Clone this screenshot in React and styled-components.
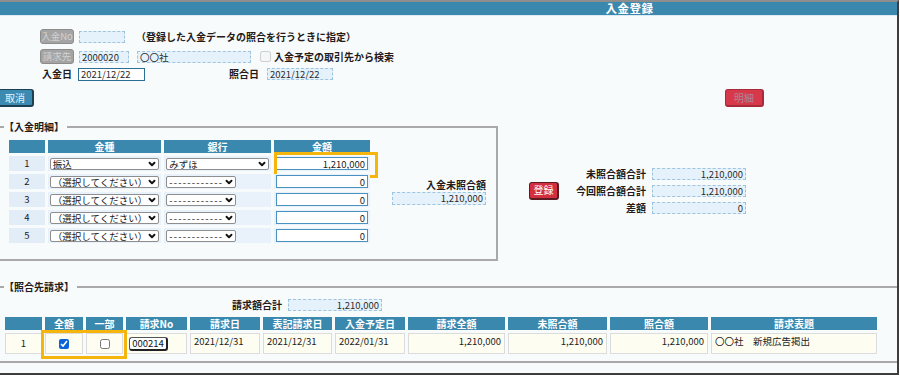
import React from 'react'
import styled, { createGlobalStyle } from 'styled-components'
import { ChevronDown } from 'lucide-react'

const FONT = `"Noto Sans CJK JP", "Noto Sans", sans-serif`

const detailRows = [
  { no: 1, kind: '振込', bank: 'みずほ', amount: '1,210,000' },
  { no: 2, kind: '（選択してください）', bank: null, amount: '0' },
  { no: 3, kind: '（選択してください）', bank: null, amount: '0' },
  { no: 4, kind: '（選択してください）', bank: null, amount: '0' },
  { no: 5, kind: '（選択してください）', bank: null, amount: '0' },
]

const summary = [
  { label: '未照合額合計', value: '1,210,000' },
  { label: '今回照合額合計', value: '1,210,000' },
  { label: '差額', value: '0' },
]

const invoiceColumns = [
  { title: '', w: 37 },
  { title: '全額', w: 38 },
  { title: '一部', w: 37 },
  { title: '請求No', w: 61 },
  { title: '請求日', w: 70 },
  { title: '表記請求日', w: 69 },
  { title: '入金予定日', w: 70 },
  { title: '請求全額', w: 97 },
  { title: '未照合額', w: 99 },
  { title: '照合額', w: 98 },
  { title: '請求表題', w: 166 },
]

const GlobalStyle = createGlobalStyle`
  * { box-sizing: border-box; }
  html, body { margin: 0; padding: 0; background: #ffffff; }
  body { font-family: ${FONT}; font-size: 10px; color: #231a1a; }
`

export default function App() {
  return (
    <>
      <GlobalStyle />
      <Frame>
        <TitleBar>入金登録</TitleBar>

        <FormRow $top={13} $left={40}>
          <DisabledTag>入金No</DisabledTag>
          <Field readOnly value='' $w={46} $gap={5} />
          <Note $gap={11}>（登録した入金データの照合を行うときに指定）</Note>
        </FormRow>
        <FormRow $top={5} $left={40}>
          <DisabledTag>請求先</DisabledTag>
          <Field readOnly value='2000020' $w={50} $gap={5} />
          <Field readOnly value='〇〇社' $w={114} $gap={8} />
          <Check type='checkbox' disabled $gap={9} />
          <Note $gap={3}>入金予定の取引先から検索</Note>
        </FormRow>
        <FormRow $top={3} $left={40} $h={14}>
          <Label $w={34}>入金日</Label>
          <Field readOnly value='2021/12/22' $w={67} $h={13} $gap={4} $active />
          <Label $w={30} $gap={84}>照合日</Label>
          <Field readOnly value='2021/12/22' $w={66} $gap={8} />
        </FormRow>
        <FormRow $top={8} $h={18}>
          <Button $variant='blue' $w={37} $gap={-3}>取消</Button>
          <Button $variant='muted' $w={39} $gap={691}>明細</Button>
        </FormRow>

        <DetailRow>
          <Section $width={502} $pad='3px 10px 13px 0'>
            <SectionTitle>【入金明細】</SectionTitle>
            <DetailInner>
              <DetailTable>
                <thead>
                  <tr>
                    <HeadCell $w={37} />
                    <HeadCell $w={108}>金種</HeadCell>
                    <HeadCell $w={108}>銀行</HeadCell>
                    <HeadCell $w={99}>金額</HeadCell>
                  </tr>
                </thead>
                <tbody>
                  {detailRows.map((row) => (
                    <tr key={row.no}>
                      <NoCell>{row.no}</NoCell>
                      <SelectCell>
                        <Select>
                          <span>{row.kind}</span>
                          <ChevronDown size={10} strokeWidth={4.5} />
                        </Select>
                      </SelectCell>
                      <SelectCell>
                        <Select $w={row.bank ? null : 70}>
                          {row.bank ? <span>{row.bank}</span> : <Dashes>------------</Dashes>}
                          <ChevronDown size={10} strokeWidth={4.5} />
                        </Select>
                      </SelectCell>
                      <SelectCell $rel>
                        <AmountInput readOnly value={row.amount} />
                        {row.no === 1 && <Highlight $l={0} $t={-4} $w={104} $h={26} />}
                      </SelectCell>
                    </tr>
                  ))}
                </tbody>
              </DetailTable>

              <SideTotal>
                <Label>入金未照合額</Label>
                <Field readOnly value='1,210,000' $w={94} $h={13} $right />
              </SideTotal>
            </DetailInner>
          </Section>

          <SummaryArea>
            <Button $variant='red' $w={30}>登録</Button>
            <SummaryGrid>
              {summary.map((s) => (
                <React.Fragment key={s.label}>
                  <Label $right>{s.label}</Label>
                  <Field readOnly value={s.value} $w={94} $right />
                </React.Fragment>
              ))}
            </SummaryGrid>
          </SummaryArea>
        </DetailRow>

        <Section $width={910} $pad='5px 0 4px 0' $top={19}>
          <SectionTitle>【照合先請求】</SectionTitle>
          <FormRow $left={234} $h={12}>
            <Label>請求額合計</Label>
            <Field readOnly value='1,210,000' $w={94} $gap={6} $right />
          </FormRow>
          <InvoiceTable>
            <thead>
              <tr>
                {invoiceColumns.map((c, i) => (
                  <HeadCell key={i} $w={c.w}>{c.title}</HeadCell>
                ))}
              </tr>
            </thead>
            <tbody>
              <tr>
                <InvoiceCell $align='center'>1</InvoiceCell>
                <InvoiceCell $align='center' $rel>
                  <Check type='checkbox' defaultChecked $size={10} />
                  <Highlight $l={-5} $t={-4} $w={86} $h={29} />
                </InvoiceCell>
                <InvoiceCell $align='center'>
                  <Check type='checkbox' $size={10} />
                </InvoiceCell>
                <InvoiceCell>
                  <InvoiceNo>000214</InvoiceNo>
                </InvoiceCell>
                <InvoiceCell $raised>2021/12/31</InvoiceCell>
                <InvoiceCell $raised>2021/12/31</InvoiceCell>
                <InvoiceCell $raised>2022/01/31</InvoiceCell>
                <InvoiceCell $align='right' $raised>1,210,000</InvoiceCell>
                <InvoiceCell $align='right' $raised>1,210,000</InvoiceCell>
                <InvoiceCell $align='right' $raised>1,210,000</InvoiceCell>
                <InvoiceCell $raised>〇〇社　新規広告掲出</InvoiceCell>
              </tr>
            </tbody>
          </InvoiceTable>
        </Section>
      </Frame>
    </>
  )
}

const Frame = styled.div`
  width: 899px;
  height: 375px;
  background: #f7fbfb;
  border-top: 2px solid #8e8e8e;
  border-right: 2px solid #3d3d3d;
  border-bottom: 2px solid #3d3d3d;
  overflow: hidden;
`

const TitleBar = styled.div`
  height: 14px;
  background: #3a88ae;
  border-bottom: 1px solid #dcebf2;
  color: #ffffff;
  font-size: 11.5px;
  font-weight: bold;
  line-height: 13px;
  letter-spacing: 0.5px;
  padding-left: 362px;
  text-align: center;
`

const FormRow = styled.div`
  display: flex;
  align-items: center;
  height: ${({ $h }) => $h || 15}px;
  margin-top: ${({ $top }) => $top || 0}px;
  padding-left: ${({ $left }) => $left || 0}px;
`

const DisabledTag = styled.button`
  flex: none;
  width: 34px;
  height: 15px;
  padding: 0;
  background: #a4a4a4;
  color: #d2d2d2;
  border: 1px solid #8c8c8c;
  border-radius: 3px;
  font: 9.5px/13px ${FONT};
`

const Field = styled.input`
  flex: none;
  width: ${({ $w }) => $w}px;
  height: ${({ $h }) => $h || 12}px;
  margin: 0 0 0 ${({ $gap }) => $gap || 0}px;
  padding: 0 2px;
  font: 9.5px/10px ${FONT};
  color: #2a2a2a;
  text-align: ${({ $right }) => ($right ? 'right' : 'left')};
  background: ${({ $active }) => ($active ? '#ffffff' : '#e6f2fb')};
  border: ${({ $active }) => ($active ? '1.5px solid #2c6e94' : '1px dashed #9fc4de')};
  border-radius: 0;
  outline: none;
`

const Note = styled.span`
  margin-left: ${({ $gap }) => $gap || 0}px;
  font-weight: bold;
  font-size: 10px;
  line-height: 12px;
  white-space: nowrap;
`

const Label = styled.span`
  flex: none;
  width: ${({ $w }) => ($w ? `${$w}px` : 'auto')};
  margin-left: ${({ $gap }) => $gap || 0}px;
  font-weight: bold;
  font-size: 10px;
  line-height: 12px;
  white-space: nowrap;
  text-align: ${({ $right, $w }) => ($right ? 'right' : $w ? 'center' : 'left')};
`

const Check = styled.input`
  flex: none;
  width: ${({ $size }) => $size || 11}px;
  height: ${({ $size }) => $size || 11}px;
  margin: 0 0 0 ${({ $gap }) => $gap || 0}px;
  accent-color: #0b63d6;
  vertical-align: middle;
`

const buttonColors = {
  blue: { bg: '#3b8ab1', fg: '#e4f1f8', edge: '#1c3f52' },
  red: { bg: '#d3303f', fg: '#ffffff', edge: '#5a1c22' },
  muted: { bg: '#d8394a', fg: '#a08d92', edge: '#a82a38' },
}

const Button = styled.button`
  flex: none;
  width: ${({ $w }) => $w}px;
  height: 18px;
  margin-left: ${({ $gap }) => $gap || 0}px;
  padding: 0;
  background: ${({ $variant }) => buttonColors[$variant].bg};
  color: ${({ $variant }) => buttonColors[$variant].fg};
  border: 1px solid ${({ $variant }) => buttonColors[$variant].edge};
  border-right-width: 2px;
  border-bottom-width: 2px;
  border-radius: 3px;
  font: 10px/14px ${FONT};
`

const DetailRow = styled.div`
  display: flex;
  align-items: center;
  margin-top: 13px;
`

const Section = styled.fieldset`
  flex: none;
  width: ${({ $width }) => $width}px;
  min-width: 0;
  margin: ${({ $top }) => $top || 0}px 0 0 -4px;
  padding: ${({ $pad }) => $pad};
  border: 2px solid #a9a9a9;
`

const SectionTitle = styled.legend`
  margin-left: 6px;
  padding: 0 3px 0 0;
  font-weight: bold;
  font-size: 10px;
  line-height: 14px;
  color: #231a1a;
`

const DetailInner = styled.div`
  display: flex;
  align-items: center;
`

const DetailTable = styled.table`
  margin-left: 8px;
  border-collapse: separate;
  border-spacing: 3px;
  table-layout: fixed;
`

const HeadCell = styled.th`
  width: ${({ $w }) => $w}px;
  height: 13px;
  padding: 0;
  background: #3a88ae;
  color: #ffffff;
  font-size: 10px;
  font-weight: bold;
  line-height: 13px;
  text-align: center;
  white-space: nowrap;
`

const NoCell = styled.td`
  height: 15px;
  padding: 0;
  background: #e2edf8;
  font-size: 9.5px;
  line-height: 15px;
  text-align: center;
`

const SelectCell = styled.td`
  position: ${({ $rel }) => ($rel ? 'relative' : 'static')};
  height: 15px;
  padding: 0 2px;
  background: #e9f2fa;
`

const Select = styled.div`
  display: flex;
  align-items: center;
  justify-content: space-between;
  width: ${({ $w }) => ($w ? `${$w}px` : '100%')};
  height: 12px;
  padding: 0 1px 0 2px;
  background: #ffffff;
  border: 1px solid #8e8e8e;
  border-radius: 2px;
  font-size: 9.5px;
  line-height: 10px;
  color: #1a1a1a;
  white-space: nowrap;
  overflow: hidden;

  svg {
    flex: none;
    color: #111111;
  }
`

const Dashes = styled.span`
  letter-spacing: 1.2px;
`

const AmountInput = styled.input`
  display: block;
  width: 100%;
  height: 13px;
  margin: 0;
  padding: 0 2px;
  background: #ffffff;
  border: 1.5px solid #4a92c0;
  font: 9.5px/10px ${FONT};
  color: #222222;
  text-align: right;
  outline: none;
`

const Highlight = styled.span`
  position: absolute;
  left: ${({ $l }) => $l}px;
  top: ${({ $t }) => $t}px;
  width: ${({ $w }) => $w}px;
  height: ${({ $h }) => $h}px;
  border: 3px solid #f6b50c;
  pointer-events: none;
`

const SideTotal = styled.div`
  display: flex;
  flex-direction: column;
  align-items: flex-end;
  gap: 1px;
  margin-left: 19px;
`

const SummaryArea = styled.div`
  display: flex;
  align-items: center;
  margin-left: 31px;
`

const SummaryGrid = styled.div`
  display: grid;
  grid-template-columns: auto 94px;
  column-gap: 6px;
  row-gap: 5px;
  align-items: center;
  margin-left: 17px;
`

const InvoiceTable = styled.table`
  margin: 3px 0 0 4px;
  border-collapse: separate;
  border-spacing: 3px;
  table-layout: fixed;
`

const InvoiceCell = styled.td`
  position: ${({ $rel }) => ($rel ? 'relative' : 'static')};
  height: 21px;
  padding: 0 3px ${({ $raised }) => ($raised ? 5 : 2)}px 3px;
  background: #fdfdf1;
  border: 1px solid #dcdcdc;
  font-size: 9.5px;
  line-height: 12px;
  color: #222222;
  text-align: ${({ $align }) => $align || 'left'};
  vertical-align: middle;
  white-space: nowrap;
`

const InvoiceNo = styled.button`
  width: 39px;
  height: 14px;
  margin: 2px 0 0 -1px;
  padding: 0;
  background: #ffffff;
  border: 1px solid #555555;
  border-right: 2px solid #222222;
  border-bottom: 2px solid #222222;
  border-radius: 3px;
  font: 9.5px/10px ${FONT};
  color: #111111;
`
